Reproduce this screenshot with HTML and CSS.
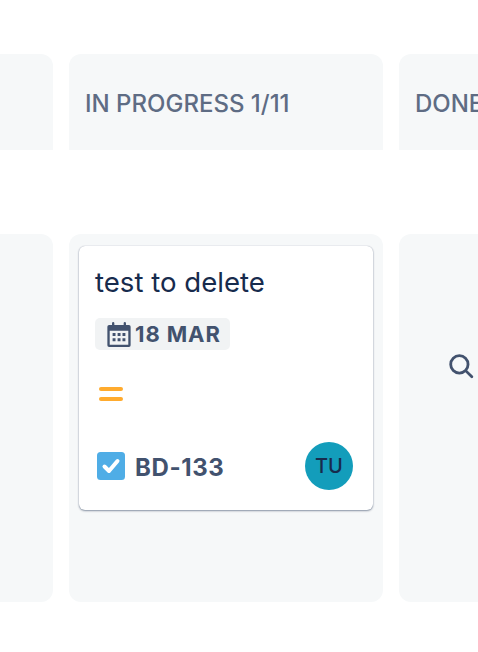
FILE: index.html
```html
<!DOCTYPE html>
<html lang="en">
<head>
    <meta charset="UTF-8">
    <meta name="viewport" content="width=device-width, initial-scale=1.0">
    <title>Board</title>
    <link rel="stylesheet" href="styles.css">
</head>
<body>
    <div class="Window">
    <div class="Board">
        <div class="Row Heads">
            <div class="Head"></div>
            <div class="Head">IN PROGRESS 1/11</div>
            <div class="Head">DONE</div>
        </div>
        <div class="Row Lists">
            <div class="List"></div>
            <div class="List">
                <div class="Card">
                    <div class="title">test to delete</div>
                    <div class="date">
                        <svg class="cal" viewBox="2 1.500 20 21.500" width="24" height="25">
                            <path fill="#42526e" fill-rule="evenodd" d="M3.500 4H6V2.500a1 1 0 0 1 2 0V4h8V2.500a1 1 0 0 1 2 0V4h2.500A1.500 1.500 0 0 1 22 5.500v16a1.500 1.500 0 0 1-1.500 1.500h-17A1.500 1.500 0 0 1 2 21.500v-16A1.500 1.500 0 0 1 3.500 4zM4 9v12h16V9z"/>
                            <path fill="#42526e" d="M6.500 11h2.500v2.500H6.500zM10.800 11h2.500v2.500h-2.500zM15 11h2.500v2.500H15zM6.500 15.500h2.500V18H6.500zM10.800 15.500h2.500V18h-2.500zM15 15.500h2.500V18H15z"/>
                        </svg>
                        <span>18 MAR</span>
                    </div>
                    <div class="priority">
                        <span></span>
                        <span></span>
                    </div>
                    <div class="foot">
                        <svg class="check" viewBox="0 0 28 28" width="28" height="28">
                            <rect width="28" height="28" rx="3.500" fill="#4fade6"/>
                            <path d="M7.500 14.500l4.500 4.500 8.500-10" fill="none" stroke="#fff" stroke-width="4" stroke-linecap="round" stroke-linejoin="round"/>
                        </svg>
                        <span class="key">BD-133</span>
                        <span class="avatar">TU</span>
                    </div>
                </div>
            </div>
            <div class="List empty">
                <svg viewBox="0 0 24 24" width="26" height="26">
                    <circle cx="10.500" cy="10.500" r="8" fill="none" stroke="#42526e" stroke-width="2.600"/>
                    <path d="M16.500 16.500l5.500 5.500" fill="none" stroke="#42526e" stroke-width="2.600" stroke-linecap="round"/>
                </svg>
            </div>
        </div>
    </div>
    </div>
</body>
</html>
```

FILE: styles.css
```css
body{
    margin: 0;
    padding: 0;
    background-color: white;
    font-family: Inter, "Liberation Sans", sans-serif;
}
.Window{
    width: 478px;
    height: 652px;
    overflow: hidden;
}
.Board{
    width: 974px;
    margin-left: -261px;
    padding-top: 54px;
}
.Row{
    display: flex;
    gap: 16px;
}
.Heads{
    margin-bottom: 84px;
}
.Head{
    width: 314px;
    height: 96px;
    box-sizing: border-box;
    padding: 35px 16px 0;
    background-color: #f6f8f9;
    border-radius: 12px 12px 0 0;
    color: #5e6c84;
    font-size: 24px;
    font-weight: 500;
    line-height: 29px;
    white-space: nowrap;
}
.List{
    width: 314px;
    height: 368px;
    box-sizing: border-box;
    padding: 12px 10px;
    background-color: #f6f8f9;
    border-radius: 12px;
}
.empty{
    padding: 119px 0 0 49px;
}
.Card{
    height: 264px;
    box-sizing: border-box;
    padding: 20px 20px 0 16px;
    background-color: white;
    border-radius: 6px;
    box-shadow: 0 1px 2px rgba(9, 30, 66, 0.45), 0 0 1px rgba(9, 30, 66, 0.3);
}
.title{
    color: #172b4d;
    font-size: 27.6px;
    line-height: 32px;
}
.date{
    display: inline-flex;
    align-items: center;
    gap: 4px;
    height: 32px;
    margin-top: 20px;
    padding: 0 9px 0 12px;
    background-color: #f1f3f4;
    border-radius: 5px;
    color: #42526e;
    font-size: 22px;
    font-weight: 700;
    letter-spacing: 0.9px;
}
.priority{
    margin: 36px 0 0 4px;
}
.priority span{
    display: block;
    width: 24px;
    height: 4px;
    margin-bottom: 6px;
    background-color: #ffab2e;
    border-radius: 2px;
}
.foot{
    display: flex;
    align-items: center;
    margin-top: 41px;
    padding-left: 2px;
}
.key{
    margin: 3px 0 0 10px;
    color: #42526e;
    font-size: 24px;
    font-weight: 700;
    letter-spacing: 0.6px;
}
.avatar{
    display: flex;
    align-items: center;
    justify-content: center;
    width: 48px;
    height: 48px;
    margin-left: auto;
    background-color: #139dbb;
    border-radius: 50%;
    color: #172b4d;
    font-size: 20px;
    font-weight: 500;
}
```
